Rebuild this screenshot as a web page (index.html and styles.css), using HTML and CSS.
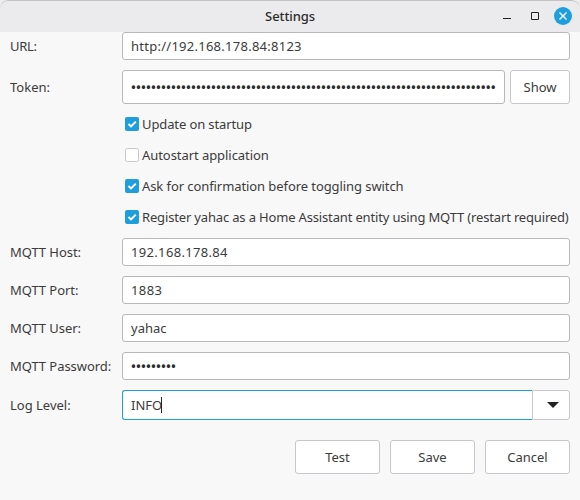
FILE: index.html
```html
<!DOCTYPE html>
<html lang="en">
<head>
<meta charset="utf-8">
<title>Settings</title>
<link rel="stylesheet" href="styles.css">
</head>
<body>
<div class="window">
  <header class="titlebar">
    <span class="title"><span class="t-title">Settings</span></span>
    <div class="controls">
      <svg width="10" height="18" viewBox="0 0 10 18"><path d="M1 11.500h8" stroke="#222" fill="none"/></svg>
      <svg width="10" height="18" viewBox="0 0 10 18"><path d="M1.500 5.500h7v7h-7z" stroke="#222" fill="none"/></svg>
      <svg width="18" height="18" viewBox="0 0 18 18"><circle cx="9" cy="9" r="9" fill="#1f9ede"/><path d="M5.500 5.500l7 7M12.500 5.500l-7 7" stroke="#fff" stroke-width="1.300" fill="none"/></svg>
    </div>
  </header>
  <main class="form">
    <div class="row"><label class="label"><span class="t-url">URL:</span></label><div class="field"><span class="t-address">http://192.168.178.84:8123</span></div></div>
    <div class="row tall"><label class="label"><span class="t-token">Token:</span></label><div class="field"><span class="dots">•••••••••••••••••••••••••••••••••••••••••••••••••••••••••••••••••••••••••</span></div><button class="button show"><span class="t-show">Show</span></button></div>
    <div class="checks">
      <label class="check"><svg class="box" viewBox="0 0 14 14"><rect width="14" height="14" rx="2" fill="#1f9ede"/><path d="M3.500 7l2.500 2.400 4.800-4.800" stroke="#fff" stroke-width="2" fill="none"/></svg><span class="t-update">Update on startup</span></label>
      <label class="check"><svg class="box" viewBox="0 0 14 14"><rect x=".5" y=".5" width="13" height="13" rx="2" fill="#fff" stroke="#c8c8c8"/></svg><span class="t-auto">Autostart application</span></label>
      <label class="check"><svg class="box" viewBox="0 0 14 14"><rect width="14" height="14" rx="2" fill="#1f9ede"/><path d="M3.500 7l2.500 2.400 4.800-4.800" stroke="#fff" stroke-width="2" fill="none"/></svg><span class="t-ask">Ask for confirmation before toggling switch</span></label>
      <label class="check"><svg class="box" viewBox="0 0 14 14"><rect width="14" height="14" rx="2" fill="#1f9ede"/><path d="M3.500 7l2.500 2.400 4.800-4.800" stroke="#fff" stroke-width="2" fill="none"/></svg><span class="t-register">Register yahac as a Home Assistant entity using MQTT (restart required)</span></label>
    </div>
    <div class="row"><label class="label"><span class="t-mqtt">MQTT Host:</span></label><div class="field"><span class="t-ip">192.168.178.84</span></div></div>
    <div class="row"><label class="label"><span class="t-mqtt">MQTT Port:</span></label><div class="field"><span class="t-port">1883</span></div></div>
    <div class="row"><label class="label"><span class="t-mqtt">MQTT User:</span></label><div class="field"><span class="t-user">yahac</span></div></div>
    <div class="row"><label class="label"><span class="t-mqtt">MQTT Password:</span></label><div class="field"><span class="dots">•••••••••</span></div></div>
    <div class="row combo"><label class="label"><span class="t-log">Log Level:</span></label><div class="field focused"><span class="t-info">INFO</span><i class="caret"></i></div><button class="arrow"><svg width="12" height="6" viewBox="0 0 12 6"><path d="M0 0h12L6 6z" fill="#222"/></svg></button></div>
    <div class="actions">
      <button class="button"><span class="t-test">Test</span></button>
      <button class="button"><span class="t-save">Save</span></button>
      <button class="button"><span class="t-cancel">Cancel</span></button>
    </div>
  </main>
</div>
</body>
</html>
```
FILE: styles.css
```css
* { box-sizing: border-box; }
body {
  margin: 0;
  background: #ededed;
  color: #3b3b3b;
  font: 13px/18px "Noto Sans", sans-serif;
}
.window { height: 500px; background: #f8f8f8; border-radius: 8px 8px 0 0; overflow: hidden; }
.titlebar {
  display: grid;
  grid-template-columns: 1fr auto 1fr;
  align-items: center;
  height: 32px;
  padding: 0 8px;
  background: #ebebed;
  box-shadow: inset 0 1px #c4c4c4;
  border-radius: 8px 8px 0 0;
}
.title { grid-column: 2; color: #2b2b2b; font-weight: 500; letter-spacing: -0.1px; }
.controls { display: flex; justify-content: flex-end; gap: 18px; }
.controls svg:last-child { margin-left: -4px; }
.form { display: flex; flex-direction: column; gap: 10px; padding: 0 10px; }
.row { display: flex; align-items: center; height: 28px; white-space: nowrap; }
.row.tall { height: 34px; }
.row.combo { height: 30px; }
.label { width: 112px; flex: none; }
.field {
  display: flex;
  align-items: center;
  flex: 1;
  min-width: 0;
  height: 100%;
  padding: 0 8px;
  background: #fff;
  border: 1px solid #b8b8b8;
  border-radius: 3px;
}
.focused { border-color: #1f9ede; border-right: 0; border-radius: 3px 0 0 3px; }
.caret { width: 1px; height: 16px; margin-left: -1px; background: #222; }
.button, .arrow {
  height: 34px;
  padding: 0;
  background: #fff;
  border: 1px solid #c6c6cc;
  border-radius: 3px;
  color: inherit;
  font: inherit;
}
.button { width: 85px; }
.show { width: 60px; margin-left: 5px; }
.arrow {
  display: flex;
  align-items: center;
  justify-content: center;
  width: 38px;
  height: 100%;
  padding-left: 3px;
  border-radius: 0 3px 3px 0;
}
.checks { display: flex; flex-direction: column; gap: 13px; height: 114px; padding: 1px 0 0 115px; }
.check { display: flex; align-items: center; gap: 3px; height: 18px; white-space: nowrap; }
.box { width: 14px; height: 14px; flex: none; }
.actions { display: flex; justify-content: flex-end; gap: 10px; margin-top: 10px; }
.dots { color: #2b2b2b; font-weight: 600; letter-spacing: 0.11px; }
.t-address { letter-spacing: 0.26px; }
.t-ip { letter-spacing: 0.33px; }
.t-port { letter-spacing: 0.4px; }
.t-url { letter-spacing: -0.3px; }
.t-update { letter-spacing: -0.11px; }
.t-auto { letter-spacing: -0.06px; }
.t-ask { letter-spacing: -0.08px; }
.t-register { letter-spacing: -0.16px; }
.t-mqtt { letter-spacing: -0.06px; }
```
